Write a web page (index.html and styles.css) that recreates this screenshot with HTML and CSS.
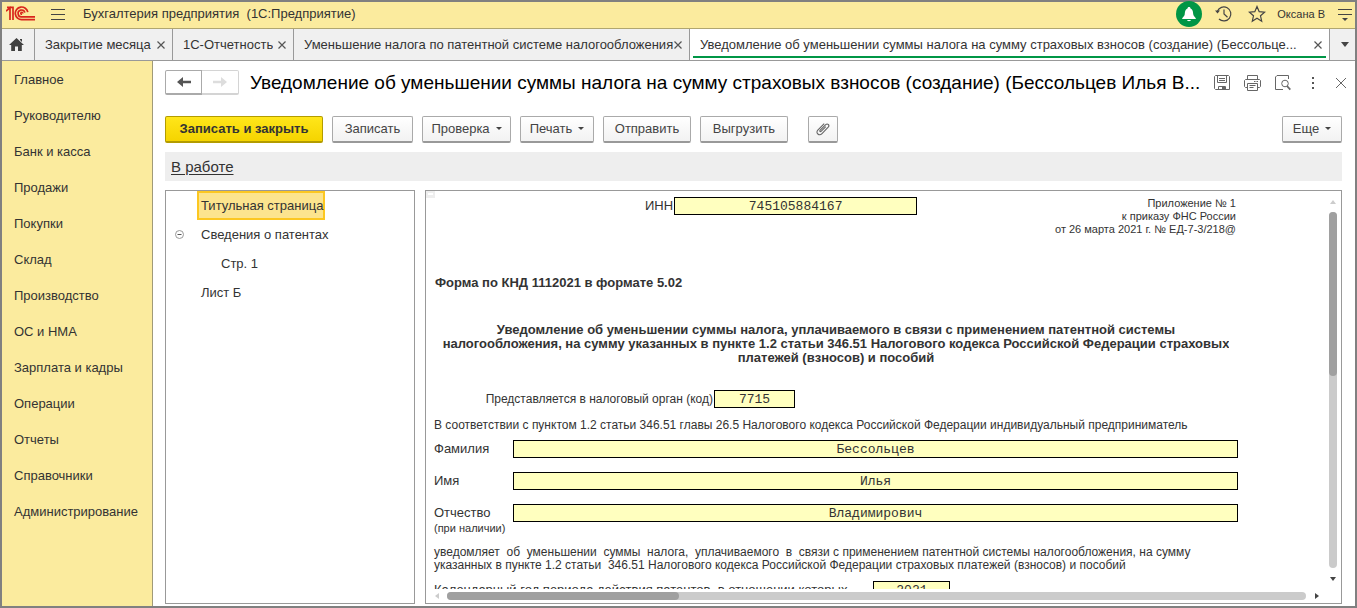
FILE: index.html
```html
<!DOCTYPE html>
<html lang="ru">
<head>
<meta charset="utf-8">
<title>Бухгалтерия предприятия</title>
<link rel="stylesheet" href="styles.css">
</head>
<body>
<div class="window">
  <header class="topbar">
    <svg class="logo" width="30" height="16" viewBox="0 0 30 16" fill="none" stroke="#d9251c" stroke-width="1.7" aria-label="1С" role="img">
      <path d="M0 5.2 L4 1.8 V14 M1 1.4 H7 V14 M3.4 1.4 V3"/>
      <path d="M21.8 6.2 A6.3 6.3 0 1 0 16 13.6 H29"/>
      <path d="M18.8 6.6 A3.4 3.4 0 1 0 16 10.8 H29"/>
      <path d="M16.6 7.6 A.9 .9 0 1 0 16 8.2"/>
    </svg>
    <button class="plain menu-btn" aria-label="Меню"><svg width="14" height="12" viewBox="0 0 14 12" stroke="#444" fill="none"><path d="M0 1.5H14M0 6.5H14M0 11.5H14"/></svg></button>
    <span class="app-name">Бухгалтерия предприятия&nbsp; (1С:Предприятие)</span>
    <div class="top-tools">
      <button class="plain bell" aria-label="Уведомления"><svg width="16" height="17" viewBox="0 0 16 17" fill="#fff"><path d="M8 1C9 1 9.500 1.700 9.500 2.500 12 3.500 12 6 12.300 8.500 12.600 10.500 14.500 11 15 13H1C1.500 11 3.400 10.500 3.700 8.500 4 6 4 3.500 6.500 2.500 6.500 1.700 7 1 8 1ZM6 14H10C9.700 15.500 6.300 15.500 6 14Z"/></svg></button>
      <button class="plain" aria-label="История"><svg width="18" height="18" viewBox="0 0 18 18" fill="none" stroke="#444" stroke-width="1.200"><path d="M2.300 6.500A7 7 0 1 1 4 14M9 4.500V9L12.500 12.300"/><path d="M0 5.500H5L2.500 8.500Z" fill="#444" stroke="none"/></svg></button>
      <button class="plain" aria-label="Избранное"><svg width="18" height="18" viewBox="0 0 18 18" fill="none" stroke="#444" stroke-width="1.200"><path d="M9 1.500 11.200 6.700 16.600 7.200 12.500 10.800 13.700 16.200 9 13.300 4.300 16.200 5.500 10.800 1.400 7.200 6.800 6.700Z"/></svg></button>
      <a class="user" href="#">Оксана В</a>
      <button class="plain" aria-label="Настройки"><svg width="14" height="13" viewBox="0 0 14 13"><path d="M0 1.500H14M0 6.500H14" stroke="#444"/><path d="M4 10H10L7 13Z" fill="#444"/></svg></button>
    </div>
  </header>

  <nav class="tabs" aria-label="Открытые окна">
    <button class="tab home" aria-label="Начальная страница"><svg width="15" height="13" viewBox="0 0 15 13" fill="#404040"><path d="M7.500 0 15 7H12.800V13H9V8.500H6V13H2.200V7H0L7.500 0ZM11 1H13V4L11 2Z"/></svg></button>
    <div class="tab tab-a"><a href="#">Закрытие месяца</a><button class="plain close" aria-label="Закрыть"><svg width="8" height="8" viewBox="0 0 8 8" stroke="#555" stroke-width="1.200"><path d="M.5 .5 7.500 7.500M7.500 .5 .5 7.500"/></svg></button></div>
    <div class="tab tab-b"><a href="#">1С-Отчетность</a><button class="plain close" aria-label="Закрыть"><svg width="8" height="8" viewBox="0 0 8 8" stroke="#555" stroke-width="1.200"><path d="M.5 .5 7.500 7.500M7.500 .5 .5 7.500"/></svg></button></div>
    <div class="tab tab-c"><a href="#">Уменьшение налога по патентной системе налогообложения</a><button class="plain close" aria-label="Закрыть"><svg width="8" height="8" viewBox="0 0 8 8" stroke="#555" stroke-width="1.200"><path d="M.5 .5 7.500 7.500M7.500 .5 .5 7.500"/></svg></button></div>
    <div class="tab active"><a href="#">Уведомление об уменьшении суммы налога на сумму страховых взносов (создание) (Бессольце...</a><button class="plain close" aria-label="Закрыть"><svg width="8" height="8" viewBox="0 0 8 8" stroke="#555" stroke-width="1.200"><path d="M.5 .5 7.500 7.500M7.500 .5 .5 7.500"/></svg></button></div>
    <button class="tab more-tabs" aria-label="Список окон"><i class="caret big"></i></button>
  </nav>

  <div class="body">
    <nav class="sidebar" aria-label="Разделы">
      <a href="#">Главное</a><a href="#">Руководителю</a><a href="#">Банк и касса</a><a href="#">Продажи</a><a href="#">Покупки</a><a href="#">Склад</a><a href="#">Производство</a><a href="#">ОС и НМА</a><a href="#">Зарплата и кадры</a><a href="#">Операции</a><a href="#">Отчеты</a><a href="#">Справочники</a><a href="#">Администрирование</a>
    </nav>

    <main class="main">
      <div class="title-row">
        <div class="history">
          <button aria-label="Назад"><svg width="14" height="10" viewBox="0 0 14 10" fill="#555"><path d="M0 5 6 0V3.700H14V6.300H6V10Z"/></svg></button>
          <button aria-label="Вперед" disabled><svg width="14" height="10" viewBox="0 0 14 10" fill="#ddd"><path d="M14 5 8 0V3.700H0V6.300H8V10Z"/></svg></button>
        </div>
        <h1>Уведомление об уменьшении суммы налога на сумму страховых взносов (создание) (Бессольцев Илья В...</h1>
        <div class="title-tools">
          <button class="plain" aria-label="Сохранить"><svg width="16" height="16" viewBox="0 0 16 16" fill="none" stroke="#666"><path d="M1.500 .5H14.500L15.500 1.500V14.500H1.500L.5 13.500V1.500ZM3.500 .5V7.500H12.500V.5M5 3.500H11M5 5.500H11M4.500 15V11.500H11.500V15"/><path d="M8 12H11V15H8Z" fill="#666" stroke="none"/></svg></button>
          <button class="plain" aria-label="Печать"><svg width="17" height="16" viewBox="0 0 17 16" fill="none" stroke="#666"><path d="M3.500 4.500V.5H13.500V4.500M3.500 12.500H1.500L.5 11.500V5.500L1.500 4.500H15.500L16.500 5.500V11.500L15.500 12.500H13.500M3.500 8.500H13.500V15.500H3.500ZM5.500 10.500H11.500M5.500 12.500H9.500M10 6.500H11.500M12.500 6.500H14"/></svg></button>
          <button class="plain" aria-label="Просмотр"><svg width="16" height="16" viewBox="0 0 16 16" fill="none" stroke="#666"><path d="M13.500 4V.5H2L.5 2V14.500H8"/><circle cx="10" cy="8.500" r="3.300"/><path d="M12 11 15.300 14.600" stroke-width="1.800"/></svg></button>
          <button class="plain" aria-label="Ещё"><svg width="16" height="16" viewBox="0 0 16 16" fill="#555"><path d="M7 2H9V4H7ZM7 7H9V9H7ZM7 12H9V14H7Z"/></svg></button>
          <button class="plain" aria-label="Закрыть"><svg width="12" height="12" viewBox="0 0 12 12" stroke="#666"><path d="M1 1 11 11M11 1 1 11"/></svg></button>
        </div>
      </div>

      <div class="commands">
        <button class="btn primary">Записать и закрыть</button>
        <button class="btn">Записать</button>
        <button class="btn drop">Проверка<i class="caret"></i></button>
        <button class="btn drop print">Печать<i class="caret"></i></button>
        <button class="btn wide">Отправить</button>
        <button class="btn wide">Выгрузить</button>
        <button class="btn clip" aria-label="Вложения"><svg width="14" height="14" viewBox="0 0 14 14" fill="none" stroke="#666" stroke-width="1.100"><path d="M9.800 4.600 5.300 9.200C4.300 10.200 3.200 9.200 4.200 8.100L9.700 2.700C11.500 .9 14 3.100 12.200 5.200L6 11.600C3.200 14.400 -.8 11 1.800 8.100L8.200 1.600"/></svg></button>
        <button class="btn drop more">Еще<i class="caret"></i></button>
      </div>

      <div class="status"><a href="#">В работе</a></div>

      <div class="panels">
        <ul class="tree">
          <li><a class="selected" href="#">Титульная страница</a></li>
          <li><button class="plain toggle" aria-label="Свернуть"><svg width="9" height="9" viewBox="0 0 9 9" fill="none" stroke="#999"><circle cx="4.500" cy="4.500" r="4"/><path d="M2.500 4.500H6.500" stroke="#555"/></svg></button><a href="#">Сведения о патентах</a></li>
          <li class="child"><a href="#">Стр. 1</a></li>
          <li><a href="#">Лист Б</a></li>
        </ul>

        <section class="sheet">
          <i class="corner"></i>
          <div class="view">
            <form class="doc">
              <div class="head">
                <div class="inn"><label for="inn">ИНН</label><input id="inn" value="745105884167"></div>
                <p class="annex">Приложение № 1<br>к приказу ФНС России<br>от 26 марта 2021 г. № ЕД-7-3/218@</p>
              </div>
              <p class="knd">Форма по КНД 1112021 в формате 5.02</p>
              <h2>Уведомление об уменьшении суммы налога, уплачиваемого в связи с применением патентной системы<br><span>налогообложения, на сумму указанных в пункте 1.2 статьи 346.51 Налогового кодекса Российской Федерации страховых</span><br>платежей (взносов) и пособий</h2>
              <div class="organ"><label for="organ">Представляется в налоговый орган (код)</label><input id="organ" value="7715"></div>
              <p class="basis">В соответствии с пунктом 1.2 статьи 346.51 главы 26.5 Налогового кодекса Российской Федерации индивидуальный предприниматель</p>
              <div class="person">
                <label for="fam">Фамилия</label><input id="fam" value="Бессольцев">
                <label for="name">Имя</label><input id="name" value="Илья">
                <label for="pat">Отчество</label><input id="pat" value="Владимирович">
              </div>
              <p class="note">(при наличии)</p>
              <p class="notify">уведомляет  об  уменьшении  суммы  налога,  уплачиваемого  в  связи с применением патентной системы налогообложения, на сумму
указанных в пункте 1.2 статьи  346.51 Налогового кодекса Российской Федерации страховых платежей (взносов) и пособий</p>
              <div class="year"><label for="year">Календарный год периода действия патентов, в отношении которых</label><input id="year" value="2021"></div>
            </form>
          </div>
          <div class="vbar"><i class="arrow up"></i><div class="track"><div class="thumb"></div></div><i class="arrow down"></i></div>
          <div class="hbar"><i class="arrow left"></i><div class="track"><div class="thumb"></div></div><i class="arrow right"></i></div>
        </section>
      </div>
    </main>
  </div>
</div>
</body>
</html>
```
FILE: styles.css
```css
* { box-sizing: border-box; }
body { margin: 0; font: 13px/16px "Liberation Sans", Arial, sans-serif; color: #333; }
a { color: inherit; text-decoration: none; }
p, h1, h2, ul { margin: 0; padding: 0; }
button, input { font: inherit; color: inherit; }
svg { display: block; }
.plain { border: 0; padding: 0; background: none; display: flex; align-items: center; justify-content: center; }

.window { height: 100vh; display: flex; flex-direction: column; border: 2px solid #808080; background: #fff; }

.topbar { flex: none; height: 27px; display: flex; align-items: center; background: #fbeb9e; border-bottom: 1px solid #b0a670; padding: 0 1px 2px 4px; }
.menu-btn { margin-left: 15px; }
.app-name { margin-left: 18px; }
.top-tools { margin-left: auto; display: flex; align-items: center; gap: 11px; }
.top-tools .plain { min-width: 18px; height: 18px; }
.top-tools .bell { width: 26px; height: 26px; border-radius: 50%; background: #009646; margin-right: 2px; }
.bell + .plain { margin-right: 4px; }
.user { font-size: 11px; }

.tabs { flex: none; display: flex; height: 32px; background: #f0f0f0; border-bottom: 1px solid #999; }
.tab { display: flex; align-items: center; justify-content: space-between; border: 0; border-right: 1px solid #999; padding: 0 6px 0 10px; white-space: nowrap; background: none; }
.tab a { overflow: hidden; }
.close { flex: none; width: 10px; height: 16px; }
.home { width: 33px; padding: 0 9px 0 7px; }
.tab-a { width: 138px; }
.tab-b { width: 121px; }
.tab-c { width: 396px; }
.active { flex: 1; min-width: 0; background: linear-gradient(#009646, #009646) center bottom 2px / calc(100% - 6px) 2px no-repeat #fff; }
.more-tabs { width: 25px; justify-content: center; padding: 0 0 0 4px; border-right: 0; }
.caret { border: 3px solid transparent; border-top-color: #444; border-bottom: 0; }
.caret.big { border-width: 5px 4px 0; }

.body { flex: 1; min-height: 0; display: flex; }
.sidebar { flex: none; width: 151px; background: #fbeb9e; border-right: 1px solid #a09a78; padding: 1px 0 0 12px; display: flex; flex-direction: column; }
.sidebar a { line-height: 36px; }
.main { flex: 1; min-width: 0; display: flex; flex-direction: column; padding: 9px 13px 2px 12px; }

.title-row { display: flex; align-items: center; height: 25px; }
.history { flex: none; display: flex; }
.history button { width: 37px; height: 25px; display: flex; align-items: center; justify-content: center; background: #fff; border: 1px solid #aaa; border-bottom-width: 2px; border-radius: 2px 0 0 2px; padding: 0; }
.history button + button { border-color: #d4d4d4; border-left: 0; border-radius: 0 2px 2px 0; }
h1 { flex: 1; min-width: 0; font-size: 19px; line-height: 24px; font-weight: 400; color: #000; margin-left: 11px; white-space: nowrap; overflow: hidden; }
.title-tools { flex: none; display: flex; gap: 14px; align-items: center; margin-right: -5px; }

.commands { display: flex; gap: 9px; margin-top: 21px; }
.btn { height: 27px; width: 81px; display: flex; align-items: center; justify-content: center; padding: 0 0 1px; background: linear-gradient(#fff, #f2f2f2); border: 1px solid #aaa; border-bottom: 2px solid #999; border-radius: 2px; color: #444; white-space: nowrap; }
.primary { width: 158px; font-weight: 700; color: #333; background: linear-gradient(#ffe61a, #f5d400); border-color: #b39c00; }
.drop { width: 89px; gap: 6px; }
.print { width: 74px; }
.wide { width: 88px; }
.clip { width: 30px; margin-left: 11px; }
.more { width: 60px; margin-left: auto; }

.status { margin-top: 9px; height: 29px; background: #eee; padding: 0 6px; font-size: 15px; line-height: 29px; }
.status a { text-decoration: underline; text-underline-offset: 2px; }

.panels { flex: 1; min-height: 0; display: flex; gap: 10px; margin-top: 9px; }
.tree, .sheet { border: 1px solid #999; }
.tree { flex: none; width: 250px; list-style: none; }
.tree li { height: 29px; display: flex; align-items: center; padding-left: 35px; position: relative; }
.tree .child { padding-left: 55px; }
.toggle { position: absolute; left: 9px; top: 10px; }
.selected { line-height: 25px; border: 2px solid #fcc721; background: #fce48e; margin-left: -4px; padding: 0 0 0 2px; }

.sheet { flex: 1; min-width: 0; display: grid; grid-template: minmax(0, 1fr) 14px / minmax(0, 1fr) 16px; position: relative; }
.corner { position: absolute; left: 0; top: 0; width: 9px; height: 7px; border: solid #eee; border-width: 2px 2px 3px; }
.view { overflow: hidden; }
.doc { width: 812px; padding: 6px 0 0 8px; line-height: 14px; }
.doc input { height: 18px; border: 1px solid #000; background: #ffffbf; padding: 0; text-align: center; font: 13px "Liberation Mono", "Courier New", monospace; border-radius: 0; min-width: 0; }
.head { display: flex; justify-content: space-between; padding: 0 2px 0 211px; }
.inn, .organ { display: flex; gap: 1px; line-height: 18px; align-items: flex-start; }
.inn input { width: 243px; }
.annex { font-size: 11px; line-height: 13px; text-align: right; }
.knd { font-weight: 700; margin: 40px 0 33px 1px; }
h2 { font-size: 13px; line-height: 14px; text-align: center; }
h2 span { display: inline-block; max-width: 100%; overflow: hidden; white-space: nowrap; vertical-align: top; }
.organ { margin: 25px 0 10px 47px; font-size: 12px; }
.organ label { min-width: 232px; text-align: right; }
.organ input { width: 81px; }
.basis, .notify { font-size: 12px; white-space: pre; }
.person { display: grid; grid-template-columns: 79px 725px; row-gap: 14px; line-height: 18px; margin-top: 8px; }
.note { font-size: 11px; line-height: 13px; }
.notify { line-height: 13px; margin-top: 11px; }
.year { display: flex; gap: 26px; margin-top: 9px; line-height: 18px; }
.year input { width: 77px; }

.vbar { display: flex; flex-direction: column; align-items: center; padding: 9px 0 8px; }
.vbar .track { flex: 1; width: 8px; margin: 8px 0 9px; }
.vbar .thumb { height: 46%; }
.hbar { display: flex; align-items: center; padding: 0 6px 0 9px; }
.hbar .track { flex: 1; height: 8px; margin: 0 9px 0 8px; }
.hbar .thumb { width: 27%; height: 8px; }
.track { background: #cbcbcb; border-radius: 4px; }
.thumb { background: #a0a0a0; border-radius: 4px; }
.arrow { border: 3px solid transparent; }
.up { border-bottom: 4px solid #ccc; border-top: 0; }
.down { border-top: 4px solid #444; border-bottom: 0; }
.left { border-right: 4px solid #ccc; border-left: 0; }
.right { border-left: 4px solid #444; border-right: 0; }
```
